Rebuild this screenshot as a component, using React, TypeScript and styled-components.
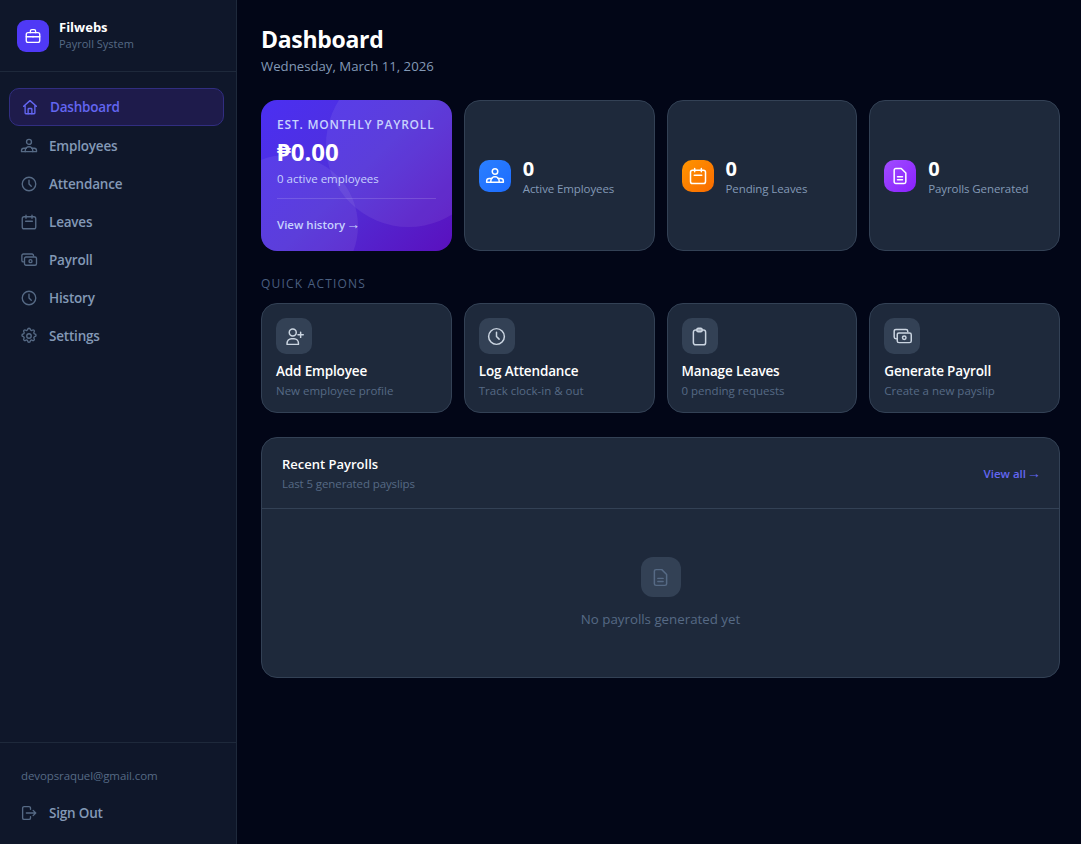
import React from 'react'
import styled, { createGlobalStyle } from 'styled-components'

const GlobalStyle = createGlobalStyle`
  * { box-sizing: border-box; }
  html, body { margin: 0; padding: 0; height: 100%; background: #020617; }
  body { font-family: "Open Sans", "Noto Sans", "Liberation Sans", sans-serif; }
`

type IconName =
  | 'briefcase' | 'home' | 'people' | 'clock' | 'calendar' | 'cash'
  | 'gear' | 'logout' | 'doc' | 'userPlus' | 'clipboard'

const paths: Record<IconName, React.ReactNode> = {
  briefcase: (
    <>
      <rect x="3" y="7.5" width="18" height="13" rx="2.5" />
      <path d="M8.5 7.5V5.5a2 2 0 0 1 2-2h3a2 2 0 0 1 2 2v2M3 13h18M12 12.5v1" />
    </>
  ),
  home: (
    <>
      <path d="M3.5 11 12 3.5l8.5 7.5M5.5 9.500V20a1 1 0 0 0 1 1h11a1 1 0 0 0 1-1V9.500" />
      <path d="M9.500 21v-6a1 1 0 0 1 1-1h3a1 1 0 0 1 1 1v6" />
    </>
  ),
  people: (
    <>
      <circle cx="12" cy="6.500" r="3.300" />
      <path d="M7 19.500V18a5 5 0 0 1 10 0v1.500" />
      <path d="M2 19.500V18a3 3 0 0 1 3-3h3.500M22 19.500V18a3 3 0 0 0-3-3h-3.500M2 19.500h20" />
    </>
  ),
  clock: (
    <>
      <circle cx="12" cy="12" r="9" />
      <path d="M12 7v5l3 3" />
    </>
  ),
  calendar: (
    <>
      <rect x="3" y="5" width="18" height="16" rx="2.500" />
      <path d="M8 3v4M16 3v4M7.500 11h9" />
    </>
  ),
  cash: (
    <>
      <path d="M18 6.500V6a2 2 0 0 0-2-2H4.500a2 2 0 0 0-2 2v6.500a2 2 0 0 0 2 2H5" />
      <rect x="6" y="8" width="16" height="11" rx="2" />
      <circle cx="14" cy="13.500" r="2" />
    </>
  ),
  gear: (
    <>
      <circle cx="12" cy="12" r="3" />
      <path d="M10.300 3.300a1.700 1.700 0 0 1 3.400 0 1.700 1.700 0 0 0 2.600 1.100 1.700 1.700 0 0 1 2.400 2.400 1.700 1.700 0 0 0 1 2.500 1.700 1.700 0 0 1 0 3.400 1.700 1.700 0 0 0-1 2.500 1.700 1.700 0 0 1-2.400 2.400 1.700 1.700 0 0 0-2.600 1.100 1.700 1.700 0 0 1-3.400 0 1.700 1.700 0 0 0-2.600-1.100 1.700 1.700 0 0 1-2.400-2.400 1.700 1.700 0 0 0-1-2.500 1.700 1.700 0 0 1 0-3.400 1.700 1.700 0 0 0 1-2.500 1.700 1.700 0 0 1 2.400-2.400 1.700 1.700 0 0 0 2.600-1.100z" />
    </>
  ),
  logout: (
    <path d="M14 7V5.500a2 2 0 0 0-2-2H5.500a2 2 0 0 0-2 2v13a2 2 0 0 0 2 2H12a2 2 0 0 0 2-2V17M8.500 12H21M17.500 8.500 21 12l-3.500 3.500" />
  ),
  doc: (
    <>
      <path d="M7 3h6.500L19 8.500V19a2 2 0 0 1-2 2H7a2 2 0 0 1-2-2V5a2 2 0 0 1 2-2z" />
      <path d="M9 13h6M9 16.500h6" />
    </>
  ),
  userPlus: (
    <>
      <circle cx="10" cy="7.500" r="4" />
      <path d="M3.500 21v-1.500a5 5 0 0 1 5-5h3a5 5 0 0 1 5 5V21zM19 7v6M16 10h6" />
    </>
  ),
  clipboard: (
    <>
      <rect x="5" y="4.500" width="14" height="17" rx="2.500" />
      <rect x="9" y="2.500" width="6" height="4" rx="1.500" />
    </>
  ),
}

const Svg = styled.svg<{ $size: number; $stroke: number }>`
  width: ${(p) => p.$size}px;
  height: ${(p) => p.$size}px;
  fill: none;
  stroke: currentColor;
  stroke-width: ${(p) => p.$stroke};
  stroke-linecap: round;
  stroke-linejoin: round;
  flex-shrink: 0;
`

const Icon = ({ name, size = 18, stroke = 1.8 }: { name: IconName; size?: number; stroke?: number }) => (
  <Svg viewBox="0 0 24 24" $size={size} $stroke={stroke}>
    {paths[name]}
  </Svg>
)

const Page = styled.div`
  display: flex;
  min-height: 844px;
  background: #020617;
`

const Sidebar = styled.aside`
  width: 237px;
  height: 844px;
  flex-shrink: 0;
  display: flex;
  flex-direction: column;
  background: #0f172a;
  border-right: 1px solid #1e293b;
`

const Brand = styled.div`
  height: 72px;
  display: flex;
  align-items: center;
  gap: 10px;
  padding: 0 17px;
  border-bottom: 1px solid #1e293b;
`

const BrandMark = styled.div`
  width: 32px;
  height: 32px;
  border-radius: 9px;
  display: flex;
  align-items: center;
  justify-content: center;
  color: #fff;
  background: #4f39f6;
`

const BrandText = styled.div`
  display: flex;
  flex-direction: column;
`

const BrandName = styled.span`
  font-size: 13px;
  line-height: 17px;
  font-weight: 700;
  color: #fff;
`

const BrandSub = styled.span`
  font-size: 11px;
  line-height: 16px;
  color: #566a85;
`

const Nav = styled.nav`
  flex: 1;
  display: flex;
  flex-direction: column;
  padding: 16px 12px 0 9px;
`

const NavItem = styled.div<{ $active?: boolean }>`
  height: 38px;
  flex-shrink: 0;
  display: flex;
  align-items: center;
  gap: 11px;
  padding: 0 11px;
  margin-bottom: ${(p) => (p.$active ? '1px' : '0')};
  border-radius: 10px;
  font-size: 13.500px;
  letter-spacing: -0.2px;
  font-weight: 600;
  color: ${(p) => (p.$active ? '#6366f1' : '#8399b6')};
  background: ${(p) => (p.$active ? '#1e1b4b' : 'transparent')};
  border: ${(p) => (p.$active ? '1px solid #312e81' : 'none')};
  svg {
    color: ${(p) => (p.$active ? '#6366f1' : '#566a85')};
  }
`

const SideFoot = styled.div`
  height: 102px;
  border-top: 1px solid #1e293b;
  padding: 25px 12px 0 9px;
`

const Email = styled.div`
  font-size: 11.500px;
  letter-spacing: -0.1px;
  line-height: 16px;
  color: #566a85;
  padding-left: 12px;
  margin-bottom: 10px;
`

const Main = styled.main`
  flex: 1;
  min-width: 0;
  padding: 24px 21px 24px 24px;
`

const Title = styled.h1`
  margin: 0;
  font-size: 23px;
  letter-spacing: -0.3px;
  line-height: 30px;
  font-weight: 700;
  color: #fff;
`

const Dateline = styled.p`
  margin: 2px 0 0;
  font-size: 13.200px;
  line-height: 20px;
  color: #8399b6;
`

const Grid = styled.div`
  display: grid;
  grid-template-columns: repeat(4, 1fr);
  gap: 12px;
`

const StatsGrid = styled(Grid)`
  margin-top: 24px;
  height: 151px;
`

const PayrollCard = styled.div`
  position: relative;
  overflow: hidden;
  border-radius: 16px;
  padding: 17px 16px 16px;
  display: flex;
  flex-direction: column;
  background: linear-gradient(135deg, #4b2ff2 0%, #5030d8 50%, #5a10be 100%);
`

const Bubble = styled.div<{ $size: number; $top: number; $left: number }>`
  position: absolute;
  width: ${(p) => p.$size}px;
  height: ${(p) => p.$size}px;
  top: ${(p) => p.$top}px;
  left: ${(p) => p.$left}px;
  border-radius: 50%;
  background: rgba(255, 255, 255, 0.07);
`

const PayrollContent = styled.div`
  position: relative;
  display: flex;
  flex-direction: column;
  flex: 1;
`

const PayrollLabel = styled.div`
  font-size: 12px;
  line-height: 16px;
  font-weight: 600;
  letter-spacing: 0.8px;
  color: #c7d2fe;
  white-space: nowrap;
`

const PayrollAmount = styled.div`
  margin-top: 3px;
  font-size: 24px;
  line-height: 32px;
  font-weight: 700;
  color: #fff;
`

const PayrollSub = styled.div`
  margin-top: 3px;
  font-size: 11.500px;
  line-height: 16px;
  color: #c7d2fe;
`

const PayrollLink = styled.div`
  margin-top: 11px;
  padding-top: 18px;
  border-top: 1px solid rgba(255, 255, 255, 0.15);
  font-size: 11.500px;
  line-height: 16px;
  font-weight: 600;
  color: #c7d2fe;
`

const Arrow = styled.span`
  font-size: 14px;
  line-height: 0;
  margin-left: -2px;
  margin-right: -2px;
`

const Card = styled.div`
  background: #1e293b;
  border: 1px solid #334155;
  border-radius: 16px;
`

const StatCard = styled(Card)`
  display: flex;
  align-items: center;
  gap: 12px;
  padding: 0 14px;
`

const StatBadge = styled.div<{ $from: string; $to: string }>`
  width: 32px;
  height: 32px;
  border-radius: 10px;
  display: flex;
  align-items: center;
  justify-content: center;
  color: #fff;
  background: linear-gradient(135deg, ${(p) => p.$from}, ${(p) => p.$to});
  flex-shrink: 0;
`

const StatText = styled.div`
  display: flex;
  flex-direction: column;
  padding-top: 2px;
`

const StatValue = styled.span`
  font-size: 20px;
  line-height: 24px;
  font-weight: 700;
  color: #fff;
`

const StatLabel = styled.span`
  font-size: 11.500px;
  letter-spacing: -0.1px;
  line-height: 16px;
  color: #8399b6;
`

const SectionLabel = styled.h2`
  margin: 25px 0 11px;
  font-size: 12px;
  line-height: 16px;
  font-weight: 400;
  letter-spacing: 1.200px;
  color: #4a5f80;
`

const ActionCard = styled(Card)`
  height: 110px;
  padding: 14px;
`

const ActionBadge = styled.div<{ $size?: number; $dim?: boolean }>`
  width: ${(p) => p.$size ?? 36}px;
  height: ${(p) => p.$size ?? 36}px;
  border-radius: ${(p) => (p.$size ? 12 : 10)}px;
  display: flex;
  align-items: center;
  justify-content: center;
  color: ${(p) => (p.$dim ? '#566a85' : '#cbd5e1')};
  background: #334155;
`

const ActionTitle = styled.div`
  margin-top: 8px;
  font-size: 13.500px;
  letter-spacing: -0.15px;
  line-height: 18px;
  font-weight: 600;
  color: #fff;
`

const ActionSub = styled.div`
  margin-top: 3px;
  font-size: 11.500px;
  line-height: 16px;
  color: #566a85;
`

const Panel = styled(Card)`
  margin-top: 24px;
  height: 241px;
  display: flex;
  flex-direction: column;
`

const PanelHead = styled.div`
  height: 71px;
  display: flex;
  align-items: center;
  justify-content: space-between;
  padding: 0 20px;
  border-bottom: 1px solid #334155;
`

const PanelTitle = styled.div`
  font-size: 13px;
  line-height: 18px;
  font-weight: 600;
  color: #fff;
`

const PanelSub = styled.div`
  margin-top: 3px;
  font-size: 11.500px;
  letter-spacing: -0.1px;
  line-height: 16px;
  color: #566a85;
`

const ViewAll = styled.span`
  font-size: 11.500px;
  font-weight: 600;
  color: #6366f1;
  white-space: nowrap;
`

const Empty = styled.div`
  flex: 1;
  display: flex;
  flex-direction: column;
  align-items: center;
  padding-top: 48px;
`

const EmptyText = styled.div`
  margin-top: 12px;
  font-size: 13.300px;
  line-height: 20px;
  color: #566a85;
`

const navItems: { label: string; icon: IconName; active?: boolean }[] = [
  { label: 'Dashboard', icon: 'home', active: true },
  { label: 'Employees', icon: 'people' },
  { label: 'Attendance', icon: 'clock' },
  { label: 'Leaves', icon: 'calendar' },
  { label: 'Payroll', icon: 'cash' },
  { label: 'History', icon: 'clock' },
  { label: 'Settings', icon: 'gear' },
]

const stats: { label: string; icon: IconName; from: string; to: string }[] = [
  { label: 'Active Employees', icon: 'people', from: '#2b7fff', to: '#1c6cff' },
  { label: 'Pending Leaves', icon: 'calendar', from: '#ff9500', to: '#f96a00' },
  { label: 'Payrolls Generated', icon: 'doc', from: '#a04cff', to: '#8a20fe' },
]

const actions: { title: string; sub: string; icon: IconName }[] = [
  { title: 'Add Employee', sub: 'New employee profile', icon: 'userPlus' },
  { title: 'Log Attendance', sub: 'Track clock-in & out', icon: 'clock' },
  { title: 'Manage Leaves', sub: '0 pending requests', icon: 'clipboard' },
  { title: 'Generate Payroll', sub: 'Create a new payslip', icon: 'cash' },
]

export default function App() {
  return (
    <Page>
      <GlobalStyle />
      <Sidebar>
        <Brand>
          <BrandMark>
            <Icon name="briefcase" />
          </BrandMark>
          <BrandText>
            <BrandName>Filwebs</BrandName>
            <BrandSub>Payroll System</BrandSub>
          </BrandText>
        </Brand>
        <Nav>
          {navItems.map((item) => (
            <NavItem key={item.label} $active={item.active}>
              <Icon name={item.icon} />
              {item.label}
            </NavItem>
          ))}
        </Nav>
        <SideFoot>
          <Email>devopsraquel@gmail.com</Email>
          <NavItem>
            <Icon name="logout" />
            Sign Out
          </NavItem>
        </SideFoot>
      </Sidebar>
      <Main>
        <Title>Dashboard</Title>
        <Dateline>Wednesday, March 11, 2026</Dateline>
        <StatsGrid>
          <PayrollCard>
            <Bubble $size={165} $top={-38} $left={65} />
            <Bubble $size={142} $top={55} $left={-45} />
            <PayrollContent>
              <PayrollLabel>EST. MONTHLY PAYROLL</PayrollLabel>
              <PayrollAmount>₱0.00</PayrollAmount>
              <PayrollSub>0 active employees</PayrollSub>
              <PayrollLink>View history <Arrow>→</Arrow></PayrollLink>
            </PayrollContent>
          </PayrollCard>
          {stats.map((s) => (
            <StatCard key={s.label}>
              <StatBadge $from={s.from} $to={s.to}>
                <Icon name={s.icon} size={20} />
              </StatBadge>
              <StatText>
                <StatValue>0</StatValue>
                <StatLabel>{s.label}</StatLabel>
              </StatText>
            </StatCard>
          ))}
        </StatsGrid>
        <SectionLabel>QUICK ACTIONS</SectionLabel>
        <Grid>
          {actions.map((a) => (
            <ActionCard key={a.title}>
              <ActionBadge>
                <Icon name={a.icon} size={21} stroke={1.7} />
              </ActionBadge>
              <ActionTitle>{a.title}</ActionTitle>
              <ActionSub>{a.sub}</ActionSub>
            </ActionCard>
          ))}
        </Grid>
        <Panel>
          <PanelHead>
            <div>
              <PanelTitle>Recent Payrolls</PanelTitle>
              <PanelSub>Last 5 generated payslips</PanelSub>
            </div>
            <ViewAll>View all <Arrow>→</Arrow></ViewAll>
          </PanelHead>
          <Empty>
            <ActionBadge $size={40} $dim>
              <Icon name="doc" size={21} stroke={1.7} />
            </ActionBadge>
            <EmptyText>No payrolls generated yet</EmptyText>
          </Empty>
        </Panel>
      </Main>
    </Page>
  )
}
